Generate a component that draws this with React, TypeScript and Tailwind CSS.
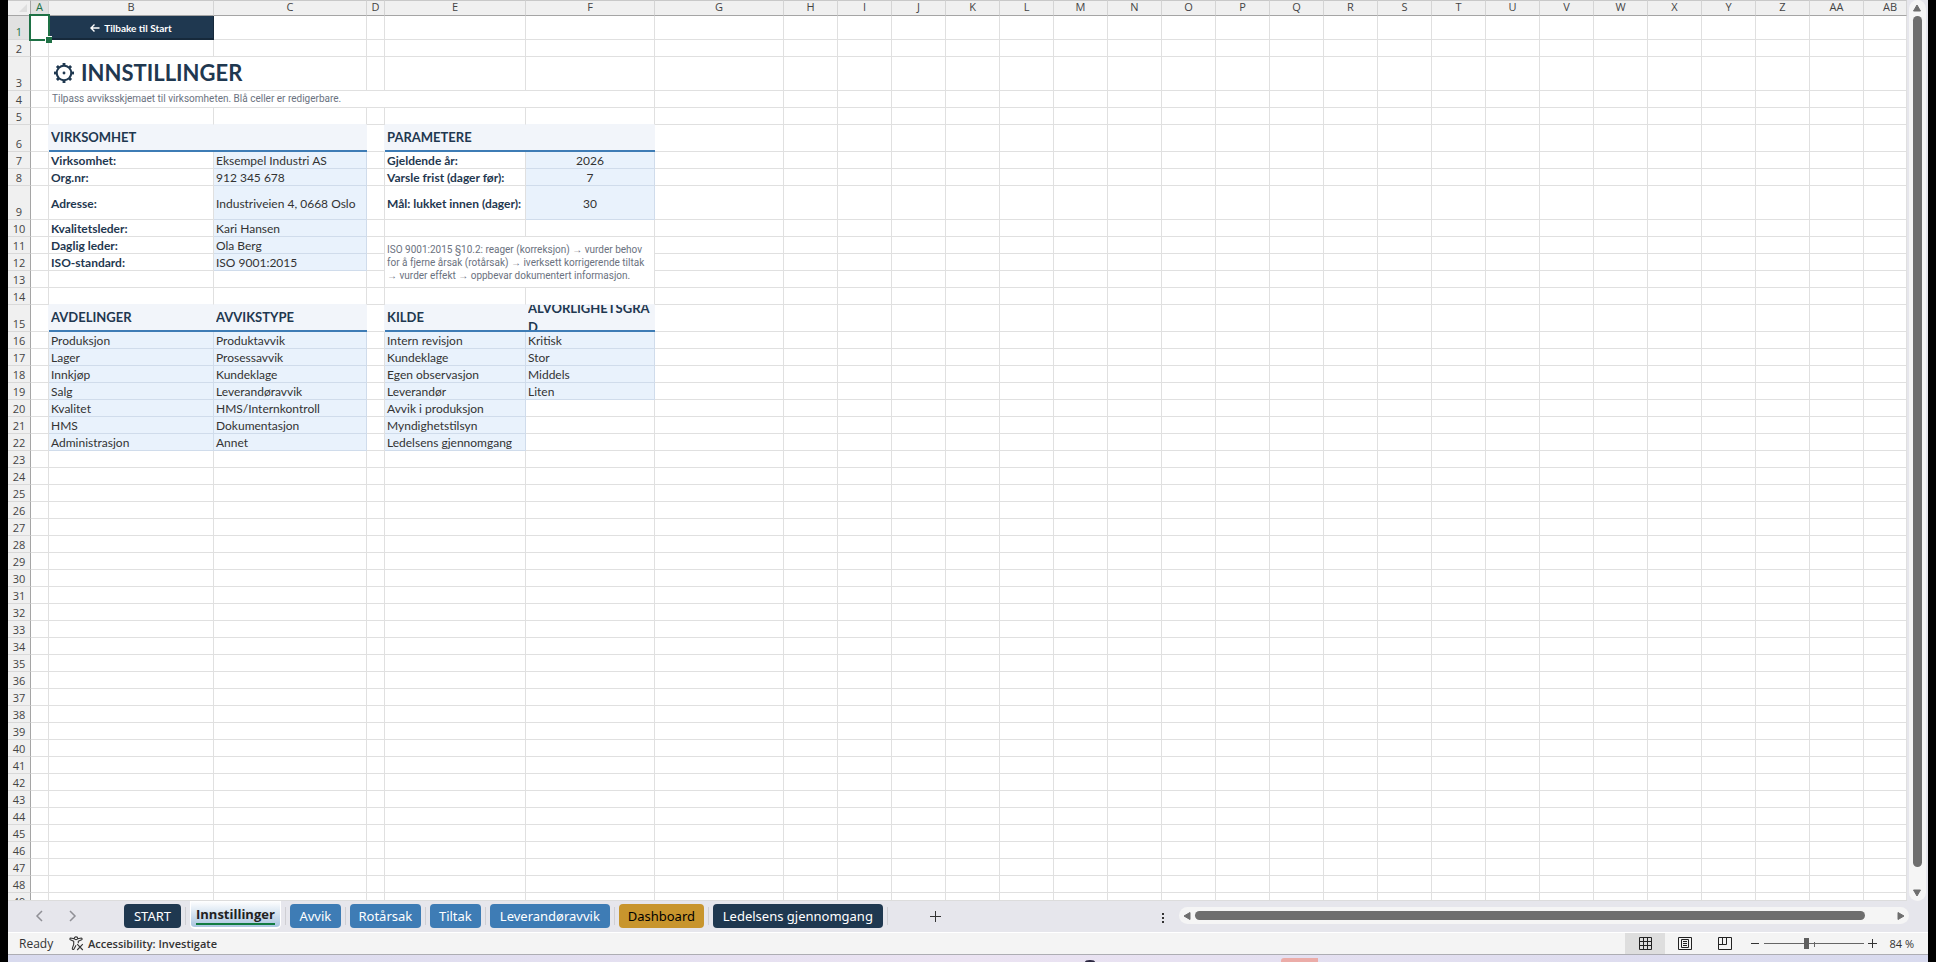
import { clsx } from "clsx";
import type { ReactNode } from "react";

type Kind = "plain" | "label" | "input" | "center" | "heading" | "link" | "title" | "subtitle" | "note";

interface Cell {
  text?: ReactNode;
  kind?: Kind;
  colSpan?: number;
  rowSpan?: number;
  edge?: string;
}

const COLUMNS = [
  "A", "B", "C", "D", "E", "F", "G", "H", "I", "J", "K", "L", "M", "N",
  "O", "P", "Q", "R", "S", "T", "U", "V", "W", "X", "Y", "Z", "AA", "AB",
];

const COLUMN_WIDTHS: Record<string, string> = {
  A: "w-[18px]",
  B: "w-[165px]",
  C: "w-[153px]",
  D: "w-[18px]",
  E: "w-[141px]",
  F: "w-[129px]",
  G: "w-[129px]",
  AB: "w-auto",
};

const ROW_HEIGHTS: Record<number, string> = {
  1: "h-6",
  3: "h-[34px]",
  6: "h-[27px]",
  9: "h-[34px]",
  15: "h-[27px]",
};

const GRID = "border-[#e0e0e0]";
const HEAD_RIGHT = "border-r-[#f2f5fa] border-b-[#e0e0e0]";
const HEAD_BOTTOM = "border-r-[#e0e0e0] border-b-[#f2f5fa]";

const label = (text: string): Cell => ({ text, kind: "label" });
const input = (text: string): Cell => ({ text, kind: "input" });
const center = (text: string): Cell => ({ text, kind: "center" });
const heading = (text: string, colSpan = 1): Cell => ({ text, kind: "heading", colSpan });

function Gear() {
  return (
    <svg viewBox="0 0 20 20" className="size-[22px] shrink-0" fill="none" stroke="currentColor" aria-hidden="true">
      <circle cx="10" cy="10" r="6.6" strokeWidth="1.9" />
      <circle cx="10" cy="10" r="1.3" fill="currentColor" stroke="none" />
      <g strokeWidth="2.6">
        {[0, 45, 90, 135, 180, 225, 270, 315].map((angle) => (
          <path key={angle} d="M10 3.2V.9" transform={`rotate(${angle} 10 10)`} />
        ))}
      </g>
    </svg>
  );
}

const ROWS: Record<number, Record<string, Cell>> = {
  1: {
    B: {
      kind: "link",
      text: (
        <a href="#start" className="flex h-[22px] items-center justify-center gap-1 pt-0.5">
          <svg viewBox="0 0 10 10" className="size-2.5" fill="none" stroke="currentColor" strokeWidth="1.4" aria-hidden="true">
            <path d="M9.5 5H1M4.5 1.5L1 5l3.5 3.5" />
          </svg>
          Tilbake til Start
        </a>
      ),
    },
  },
  3: {
    B: {
      kind: "title",
      colSpan: 2,
      text: (
        <h1 className="flex items-center gap-1.5 pl-0.5">
          <Gear />
          INNSTILLINGER
        </h1>
      ),
    },
  },
  4: {
    B: { kind: "subtitle", colSpan: 5, text: "Tilpass avviksskjemaet til virksomheten. Blå celler er redigerbare." },
  },
  5: { B: { edge: HEAD_BOTTOM }, C: { edge: HEAD_BOTTOM }, E: { edge: HEAD_BOTTOM }, F: { edge: HEAD_BOTTOM } },
  6: { A: { edge: HEAD_RIGHT }, B: heading("VIRKSOMHET", 2), D: { edge: HEAD_RIGHT }, E: heading("PARAMETERE", 2) },
  7: { B: label("Virksomhet:"), C: input("Eksempel Industri AS"), E: label("Gjeldende år:"), F: center("2026") },
  8: { B: label("Org.nr:"), C: input("912 345 678"), E: label("Varsle frist (dager før):"), F: center("7") },
  9: { B: label("Adresse:"), C: input("Industriveien 4, 0668 Oslo"), E: label("Mål: lukket innen (dager):"), F: center("30") },
  10: { B: label("Kvalitetsleder:"), C: input("Kari Hansen") },
  11: {
    B: label("Daglig leder:"),
    C: input("Ola Berg"),
    E: {
      kind: "note",
      colSpan: 2,
      rowSpan: 3,
      text: (
        <>
          ISO 9001:2015 §10.2: reager (korreksjon) → vurder behov
          <br />
          for å fjerne årsak (rotårsak) → iverksett korrigerende tiltak
          <br />→ vurder effekt → oppbevar dokumentert informasjon.
        </>
      ),
    },
  },
  12: { B: label("ISO-standard:"), C: input("ISO 9001:2015") },
  14: { B: { edge: HEAD_BOTTOM }, C: { edge: HEAD_BOTTOM }, E: { edge: HEAD_BOTTOM }, F: { edge: HEAD_BOTTOM } },
  15: {
    A: { edge: HEAD_RIGHT },
    B: heading("AVDELINGER"),
    C: heading("AVVIKSTYPE"),
    D: { edge: HEAD_RIGHT },
    E: heading("KILDE"),
    F: heading("ALVORLIGHETSGRAD"),
  },
  16: { B: input("Produksjon"), C: input("Produktavvik"), E: input("Intern revisjon"), F: input("Kritisk") },
  17: { B: input("Lager"), C: input("Prosessavvik"), E: input("Kundeklage"), F: input("Stor") },
  18: { B: input("Innkjøp"), C: input("Kundeklage"), E: input("Egen observasjon"), F: input("Middels") },
  19: { B: input("Salg"), C: input("Leverandøravvik"), E: input("Leverandør"), F: input("Liten") },
  20: { B: input("Kvalitet"), C: input("HMS/Internkontroll"), E: input("Avvik i produksjon") },
  21: { B: input("HMS"), C: input("Dokumentasjon"), E: input("Myndighetstilsyn") },
  22: { B: input("Administrasjon"), C: input("Annet"), E: input("Ledelsens gjennomgang") },
};

const KIND_STYLES: Record<Kind, string> = {
  plain: "border-r border-b",
  label: "border-r border-b px-0.5 pt-0.5 leading-[14px] font-bold text-[#1f3850]",
  input: "border-r border-b border-[#d0dceb] bg-[#e9f2fc] px-0.5 pt-0.5 leading-[14px] text-[#333]",
  center: "border-r border-b border-[#d0dceb] bg-[#e9f2fc] px-0.5 pt-0.5 text-center leading-[14px] text-[#333]",
  heading: "border-b-2 border-[#3e7cb5] bg-[#f2f5fa] px-0.5 text-[13px] font-bold text-[#1f3850]",
  link: "border-r border-b-2 border-[#16293b] bg-[#1f3850] text-[10px] font-bold text-white",
  title: "border-r border-b px-0.5 pb-0.5 text-[22px] font-bold text-[#1f3850]",
  subtitle: "border-r border-b px-[3px] font-['Roboto',sans-serif] text-[10px] text-[#6b7280]",
  note: "border-r border-b pl-0.5 font-['Roboto',sans-serif] text-[10px] leading-[13px] text-[#6b7280]",
};

const ROW_NUMBERS = Array.from({ length: 49 }, (_, i) => i + 1);

function isCovered(row: number, columnIndex: number) {
  const column = COLUMNS[columnIndex];
  if ((row === 12 || row === 13) && (column === "E" || column === "F")) return true;
  const cells = ROWS[row] ?? {};
  return COLUMNS.slice(0, columnIndex).some((name, i) => i + (cells[name]?.colSpan ?? 1) > columnIndex);
}

function SheetCell({ cell, selected }: { cell: Cell; selected: boolean }) {
  const kind = cell.kind ?? "plain";
  return (
    <td
      colSpan={cell.colSpan ?? 1}
      rowSpan={cell.rowSpan ?? 1}
      className={clsx(
        "whitespace-nowrap",
        KIND_STYLES[kind],
        cell.edge ?? (!["input", "center", "heading", "link"].includes(kind) && GRID),
        selected ? "relative" : kind === "plain" && "p-0",
      )}
    >
      {kind === "heading" ? (
        <div className="flex h-[25px] items-center overflow-hidden leading-[19px] break-all whitespace-normal">{cell.text}</div>
      ) : (
        cell.text
      )}
      {selected && (
        <div className="absolute -inset-x-0.5 -inset-y-0.5 z-10 border-2 border-[#1e7145]">
          <span className="absolute -right-1 -bottom-1 size-[7px] border-t border-l border-white bg-[#1e7145]" />
        </div>
      )}
    </td>
  );
}

function Sheet() {
  return (
    <div className="min-w-0 flex-1 overflow-hidden border-b border-[#dcdcdc] bg-white">
      <table className="w-full table-fixed border-separate border-spacing-0 font-['Lato',sans-serif] text-[12px] leading-4">
        <colgroup>
          <col className="w-[23px]" />
          {COLUMNS.map((name) => (
            <col key={name} className={COLUMN_WIDTHS[name] ?? "w-[54px]"} />
          ))}
        </colgroup>
        <thead className="font-['Open_Sans',sans-serif] text-[11px] leading-3 text-[#444]">
          <tr className="h-4">
            <th className="border-t border-r border-b border-t-[#c8c8c8] border-r-[#a5a5a5] border-b-[#a5a5a5] bg-[#f0f0f0] p-0">
              <svg viewBox="0 0 8 8" className="mr-[3px] ml-auto size-2" aria-hidden="true">
                <path d="M8 0V8H0Z" fill="#dedede" />
              </svg>
            </th>
            {COLUMNS.map((name) => (
              <th
                key={name}
                scope="col"
                className={clsx(
                  "border-t border-r border-b border-t-[#c8c8c8] border-r-[#d4d4d4] border-b-[#a5a5a5] pb-0.5 font-normal",
                  name === "A" ? "bg-[#e1e1e1] text-[#1e7145]" : "bg-[#f0f0f0]",
                  name === "AB" && "pl-2.5",
                )}
              >
                {name}
              </th>
            ))}
          </tr>
        </thead>
        <tbody>
          {ROW_NUMBERS.map((row) => (
            <tr key={row} className={ROW_HEIGHTS[row] ?? "h-[17px]"}>
              <th
                scope="row"
                className={clsx(
                  "border-r border-b border-r-[#a5a5a5] border-b-[#d9d9d9] pt-0.5 text-center align-bottom font-['Open_Sans',sans-serif] text-[11px] leading-[14px] font-normal",
                  row === 1 ? "bg-[#e1e1e1] text-[#1e7145]" : "bg-[#f0f0f0] text-[#444]",
                )}
              >
                {row}
              </th>
              {COLUMNS.map((name, i) =>
                isCovered(row, i) ? null : (
                  <SheetCell key={name} cell={ROWS[row]?.[name] ?? {}} selected={row === 1 && name === "A"} />
                ),
              )}
            </tr>
          ))}
        </tbody>
      </table>
    </div>
  );
}

function Arrow({ d, name }: { d: string; name: string }) {
  return (
    <button type="button" aria-label={name} className="flex size-4 shrink-0 items-center justify-center">
      <svg viewBox="0 0 10 10" className="size-2.5" fill="#6e6e6e" stroke="#6e6e6e" strokeLinejoin="round" aria-hidden="true">
        <path d={d} />
      </svg>
    </button>
  );
}

const TABS = [
  { name: "START", style: "w-[57px] bg-[#1f3850] text-white" },
  { name: "Innstillinger", style: "" },
  { name: "Avvik", style: "w-[51px] bg-[#3e7cb5] text-white" },
  { name: "Rotårsak", style: "w-[71px] bg-[#3e7cb5] text-white" },
  { name: "Tiltak", style: "w-[51px] bg-[#3e7cb5] text-white" },
  { name: "Leverandøravvik", style: "w-[120px] bg-[#3e7cb5] text-white" },
  { name: "Dashboard", style: "w-[85px] bg-[#c8952d] text-black" },
  { name: "Ledelsens gjennomgang", style: "w-[170px] bg-[#1f3850] text-white" },
];

function TabBar() {
  return (
    <div className="flex h-8 shrink-0 items-center border-b border-white bg-[#e6e6ec] pr-[19px] pb-0.5">
      <div className="flex w-[116px] shrink-0 gap-4 pl-6 text-[#909096]">
        {["M10 3L5 8l5 5", "M6 3l5 5-5 5"].map((d, i) => (
          <button key={d} type="button" aria-label={i ? "Next sheet" : "Previous sheet"}>
            <svg viewBox="0 0 16 16" className="size-4" fill="none" stroke="currentColor" strokeWidth="1.5" aria-hidden="true">
              <path d={d} />
            </svg>
          </button>
        ))}
      </div>
      <nav className="flex h-full shrink-0 font-['Noto_Sans',sans-serif] text-[13px] leading-5">
        {TABS.map(({ name, style }) => (
          <div key={name} className="flex items-center">
            {name === "Innstillinger" ? (
              <button
                type="button"
                aria-current="page"
                className="mb-0.5 flex h-7 items-start rounded-b-[5px] border-x border-b-2 border-white bg-linear-to-b from-white to-[#a9c5e0] px-[5px] pt-1 font-['Open_Sans',sans-serif] font-bold text-[#222]"
              >
                <span className="border-b-2 border-[#107c41] leading-[18px]">{name}</span>
              </button>
            ) : (
              <button type="button" className={clsx("h-6 rounded-[4px] whitespace-nowrap", style)}>
                {name}
              </button>
            )}
            <span className="mx-1 h-[18px] w-px bg-[#cfcfd4]" />
          </div>
        ))}
      </nav>
      <button type="button" aria-label="New sheet" className="ml-[35px]">
        <svg viewBox="0 0 16 16" className="size-4" stroke="#333" fill="none" aria-hidden="true">
          <path d="M8.5 3v11M3 8.5h11" />
        </svg>
      </button>
      <div className="ml-auto flex items-center gap-[14px]">
        <svg viewBox="0 0 4 12" className="mt-1 h-3 w-1" fill="#333" aria-hidden="true">
          <path d="M1 1h2v2H1zM1 5h2v2H1zM1 9h2v2H1z" />
        </svg>
        <div className="flex h-[17px] w-[730px] items-center rounded-full bg-[#f5f5f5]">
          <Arrow name="Scroll left" d="M2 5l6-3.5v7z" />
          <div className="h-[9px] w-[670px] rounded-full bg-[#6e6e6e]" />
          <span className="flex-1" />
          <Arrow name="Scroll right" d="M8 5L2 1.5v7z" />
        </div>
      </div>
    </div>
  );
}

function StatusBar() {
  return (
    <footer className="flex h-[22px] shrink-0 items-center border-b border-[#adadb3] bg-[#f4f4f4] pr-3.5 pl-[11px] font-['Open_Sans',sans-serif] text-[11px] leading-4 text-[#333]">
      <span className="w-[50px] text-[12px]">Ready</span>
      <button type="button" className="flex items-center gap-1 font-semibold">
        <svg viewBox="0 0 15 15" className="size-[15px]" fill="none" stroke="#333" strokeWidth="1.1" strokeLinejoin="round" aria-hidden="true">
          <path d="M5.2 2.8C5.2 1.6 6 .9 7 .9s1.8.7 1.8 1.9L12.3 2c1 .1 1.1 1.4.3 1.8L9.3 5.2v2.1M5.2 2.8L1.7 2C.8 2.1.6 3.4 1.4 3.8l3.3 1.4v3.2l-1.4 4c-.1 1 .9 1.5 1.6.8L7 9.3M5.2 2.8c.8 1.1 2.8 1.1 3.6 0" />
          <path d="M8.2 8.2l5.6 5.8M13.8 8.2L8.2 14" />
        </svg>
        Accessibility: Investigate
      </button>
      <div className="ml-auto flex h-full items-center">
        <button type="button" aria-label="Normal view" className="flex h-full w-10 items-center justify-center bg-[#dedede]">
          <svg viewBox="0 0 13 13" className="size-[13px]" fill="none" stroke="#222" aria-hidden="true">
            <path d="M.5.5h12v12H.5zM.5 4.5h12M.5 8.5h12M4.5.5v12M8.5.5v12" />
          </svg>
        </button>
        <button type="button" aria-label="Page layout view" className="flex h-full w-10 items-center justify-center">
          <svg viewBox="0 0 14 13" className="h-[13px] w-[14px]" fill="none" stroke="#222" aria-hidden="true">
            <path d="M.5.5h13v12H.5zM3.5 2.5h7v8h-7zM5 4.5h4M5 6.5h4M5 8.5h4" />
          </svg>
        </button>
        <button type="button" aria-label="Page break view" className="flex h-full w-10 items-center justify-center">
          <svg viewBox="0 0 14 13" className="h-[13px] w-[14px]" fill="none" stroke="#222" aria-hidden="true">
            <path d="M.5.5h13v12H.5zM.5 7.5h8v-7M4.5.5v7" />
          </svg>
        </button>
        <button type="button" aria-label="Zoom out" className="ml-1.5">
          <svg viewBox="0 0 9 9" className="size-[9px]" stroke="#333" aria-hidden="true">
            <path d="M0 4.5h8" />
          </svg>
        </button>
        <div className="relative mx-1 flex h-3 w-[100px] items-center">
          <span className="absolute top-1 left-[50px] h-[5px] w-px bg-[#666]" />
          <input
            type="range"
            aria-label="Zoom"
            min={0}
            max={100}
            defaultValue={42}
            className="relative h-3 w-full appearance-none bg-transparent bg-[linear-gradient(#666,#666)] bg-[length:100%_1px] bg-center bg-no-repeat [&::-webkit-slider-thumb]:h-[11px] [&::-webkit-slider-thumb]:w-[5px] [&::-webkit-slider-thumb]:appearance-none [&::-webkit-slider-thumb]:bg-[#5f5f5f]"
          />
        </div>
        <button type="button" aria-label="Zoom in">
          <svg viewBox="0 0 9 9" className="size-[9px]" stroke="#333" aria-hidden="true">
            <path d="M0 4.5h9M4.5 0v9" />
          </svg>
        </button>
        <span className="ml-3 whitespace-nowrap">84 %</span>
      </div>
    </footer>
  );
}

export default function App() {
  return (
    <main className="flex h-screen flex-col overflow-hidden border-x-8 border-black bg-[#e6e6ec]">
      <div className="flex min-h-0 flex-1">
        <Sheet />
        <div className="flex w-[21px] shrink-0 justify-center pr-px">
          <div className="flex w-[17px] flex-col items-center rounded-full bg-[#f5f5f5]">
            <Arrow name="Scroll up" d="M5 2l3.5 6h-7z" />
            <div className="mb-[18px] w-[9px] flex-1 rounded-full bg-[#6e6e6e]" />
            <Arrow name="Scroll down" d="M5 8L1.5 2h7z" />
          </div>
        </div>
      </div>
      <TabBar />
      <StatusBar />
      <div className="flex h-[7px] shrink-0 items-end bg-linear-to-r from-[#d8daee] via-[#ebe3f2] to-[#d8daee]">
        <svg viewBox="0 0 240 4" className="ml-[1070px] h-1 w-[240px]" aria-hidden="true">
          <path d="M7 4a5 2 0 0 1 10 0z" fill="#2b2740" />
          <path d="M203 4V3q0-3 3-3h34q3 0 3 3v1z" fill="#ebaca8" />
        </svg>
      </div>
    </main>
  );
}
